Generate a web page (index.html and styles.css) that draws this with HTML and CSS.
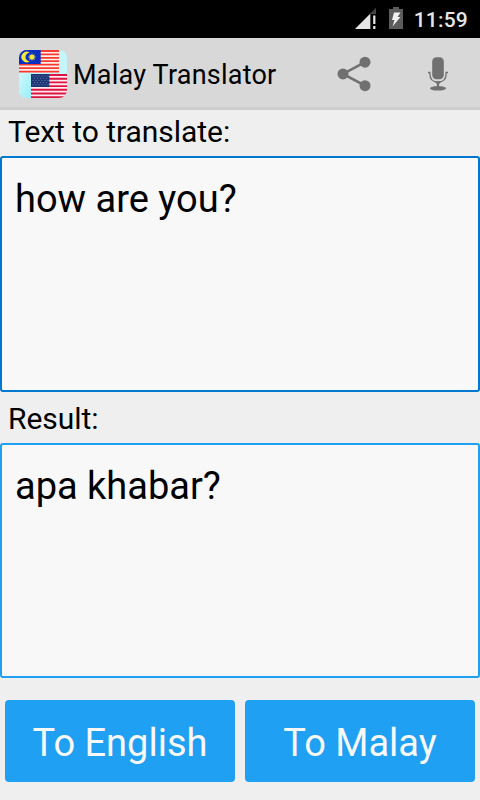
FILE: index.html
```html
<!DOCTYPE html>
<html lang="en">
<head>
    <meta charset="UTF-8">
    <meta name="viewport" content="width=device-width, initial-scale=1.0">
    <title>Malay Translator</title>
    <link rel="stylesheet" href="styles.css">
</head>
<body>
    <!-- Status Bar -->
    <div class="status-bar">
        <svg class="signal" width="22" height="22" viewBox="0 0 22 22">
            <path d="M21 0V21H0Z" fill="#444"/>
            <path d="M15.500 5.500V21H0Z" fill="#e6e6e6"/>
            <path d="M15.500 6h6v16h-6z" fill="#000"/>
            <path d="M15.500 6l5.500-6v6z" fill="#444"/>
            <path d="M18.200 7.500h2.200v8.500h-2.200zM18.200 18h2.200v3h-2.200z" fill="#e6e6e6"/>
        </svg>
        <svg class="battery" width="14" height="22" viewBox="0 0 14 22">
            <path d="M4 0h6v2h4v20H0V2h4z" fill="#5c5c5c"/>
            <path d="M5 5.500h6.500L8.500 10H11.500L3.500 19.500L5.500 13H3Z" fill="#f2f2f2"/>
        </svg>
        <span class="clock">11:59</span>
    </div>

    <!-- Action Bar -->
    <header class="action-bar">
        <svg class="logo" width="48" height="48" viewBox="0 0 48 48">
            <defs>
                <linearGradient id="sky" x1="0" y1="0" x2="1" y2="1">
                    <stop offset="0" stop-color="#d0f8fb"/>
                    <stop offset="1" stop-color="#98effa"/>
                </linearGradient>
                <clipPath id="rounded"><rect width="48" height="48" rx="8"/></clipPath>
            </defs>
            <g clip-path="url(#rounded)">
                <rect width="48" height="48" fill="#c4f6f9"/>
                <rect y="22" width="12" height="26" fill="url(#sky)"/>
                <!-- Malaysia -->
                <rect width="40" height="22.500" fill="#fff0e8"/>
                <path d="M0 1H40M0 4.400H40M0 7.800H40M0 11.200H40M0 14.600H40M0 18.100H40M0 21.600H40" stroke="#fa3832" stroke-width="1.800"/>
                <rect width="21.700" height="14" fill="#0b2fc0"/>
                <path d="M10.800 2.700A5.300 5.300 0 1 0 10.800 11.300A4.300 4.300 0 1 1 10.800 2.700Z" fill="#f2e83a"/>
                <path d="M13 3l.8 2.200 2.100-1-.9 2.100 2.300.7-2.300.8.9 2.100-2.100-1L13 11l-.8-2.100-2.100 1 .9-2.100L8.700 7l2.300-.7-.9-2.100 2.100 1z" fill="#f2e83a"/>
                <!-- United States -->
                <rect x="12" y="24" width="36" height="24" fill="#ffe9f0"/>
                <path d="M12 25H48M12 28.700H48M12 32.400H48M12 36.100H48M12 39.800H48M12 43.500H48M12 47.200H48" stroke="#dc143f" stroke-width="1.900"/>
                <rect x="12" y="24" width="18.300" height="13" fill="#1c3474"/>
                <path d="M13.500 26H30M15 28.200H30M13.500 30.400H30M15 32.600H30M13.500 34.800H30" stroke="#6f83b4" stroke-width="1" stroke-dasharray="1 2"/>
            </g>
        </svg>
        <h1>Malay Translator</h1>
        <svg class="share" width="34" height="36" viewBox="0 0 34 36">
            <path d="M28 6.200L6 17.900L28 29.700" fill="none" stroke="#707070" stroke-width="2.600"/>
            <circle cx="6" cy="17.900" r="5.500" fill="#707070"/>
            <circle cx="28" cy="6.200" r="5.500" fill="#707070"/>
            <circle cx="28" cy="29.700" r="5.500" fill="#707070"/>
        </svg>
        <svg class="mic" width="20" height="36" viewBox="0 0 20 36">
            <rect x="4.200" y="1.200" width="11.600" height="22" rx="4.200" fill="#707070"/>
            <path d="M0 16.500H1.900V18C1.900 23 5 26 10 26S18.100 23 18.100 18V16.500H20" fill="none" stroke="#707070" stroke-width="1.300"/>
            <path d="M6.500 25.500h7l-2.400 2.500v3H8.900v-3z" fill="#707070"/>
            <ellipse cx="10" cy="32.300" rx="8" ry="2.300" fill="#707070"/>
        </svg>
    </header>

    <!-- Translator -->
    <main>
        <div class="label">Text to translate:</div>
        <div class="text-box focused">how are you?</div>
        <div class="label">Result:</div>
        <div class="text-box">apa khabar?</div>
        <div class="buttons">
            <button id="englishBtn">To English</button>
            <button id="malayBtn">To Malay</button>
        </div>
    </main>
</body>
</html>
```
FILE: styles.css
```css
* {
    box-sizing: border-box;
}

body {
    font-family: Roboto, sans-serif;
    background-color: #efefef;
    color: #000;
    height: 800px;
    margin: 0;
    overflow: hidden;
}

/* Status Bar */
.status-bar {
    display: flex;
    justify-content: flex-end;
    height: 38px;
    padding: 8px 12px 0 0;
    background-color: #000;
}

.battery {
    margin: -1px 11px 0 12px;
}

.clock {
    color: #e6e6e6;
    font-size: 21px;
    font-weight: 500;
    letter-spacing: 0.2px;
    line-height: 24px;
}

/* Action Bar */
.action-bar {
    display: flex;
    align-items: center;
    height: 72px;
    padding: 0 32px 0 19px;
    background-color: #d8d8d8;
    border-bottom: 3px solid #cecece;
}

.logo {
    margin-top: 3px;
}

h1 {
    flex: 1;
    margin: 5px 0 0 6px;
    font-size: 27px;
    font-weight: 400;
    letter-spacing: 0.22px;
    line-height: 32px;
}

.share {
    margin: 3px 57px 0 0;
}

.mic {
    margin-top: 3px;
}

/* Translator */
.label {
    height: 46px;
    padding: 4px 8px 0;
    font-size: 30px;
    letter-spacing: -0.04px;
    line-height: 36px;
}

.text-box {
    height: 235px;
    margin-bottom: 5px;
    padding: 19px 13px;
    border: 2px solid #20a0f2;
    border-radius: 3px;
    background-color: #f8f8f8;
    font-size: 38px;
    line-height: 45px;
}

.text-box.focused {
    height: 236px;
    border-color: #0078d0;
}

.buttons {
    display: flex;
    gap: 10px;
    padding: 17px 5px 0;
}

button {
    flex: 1;
    height: 82px;
    padding: 4px 0 0;
    border: none;
    border-radius: 4px;
    background-color: #20a0f2;
    color: #f8f8f8;
    font-family: inherit;
    font-size: 38px;
    cursor: pointer;
}
```
